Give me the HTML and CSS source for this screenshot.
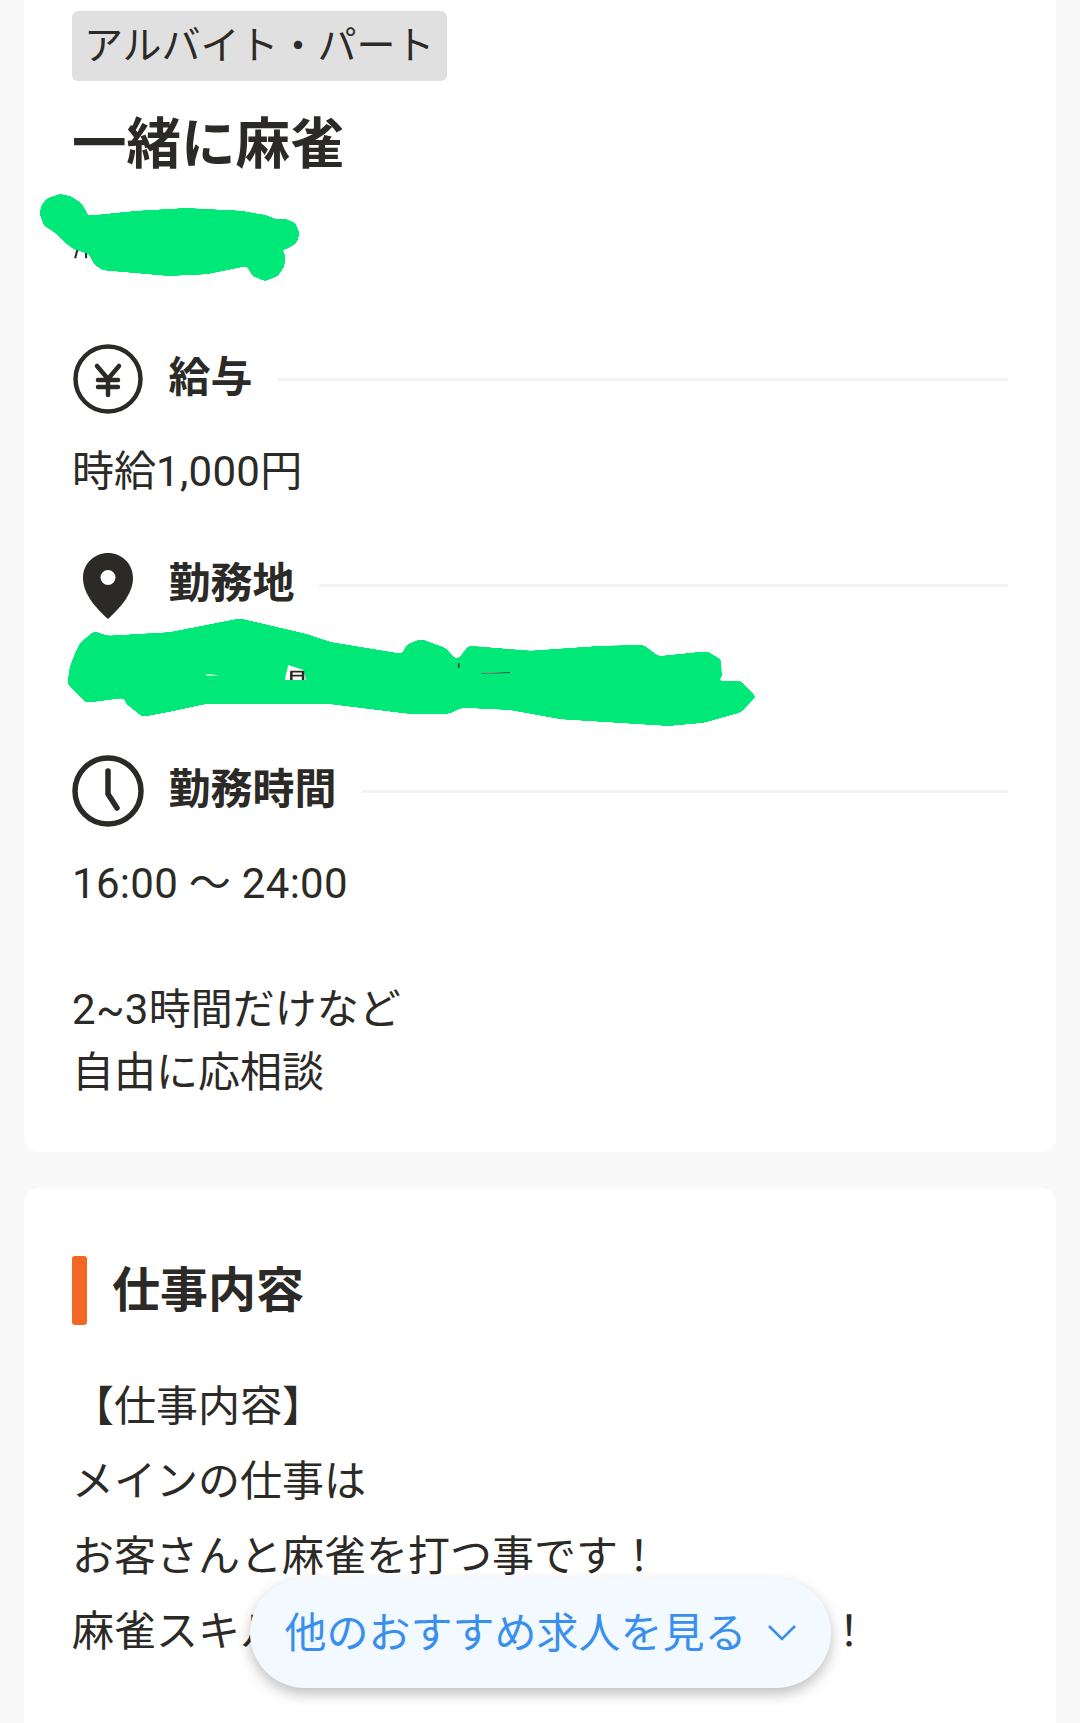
FILE: index.html
```html
<!DOCTYPE html>
<html lang="ja">
<head>
<meta charset="utf-8">
<title>一緒に麻雀</title>
<link rel="stylesheet" href="styles.css">
</head>
<body>
<svg class="defs" width="0" height="0" aria-hidden="true">
  <filter id="soften" x="-5%" y="-5%" width="110%" height="110%">
    <feGaussianBlur stdDeviation="5"/>
    <feComponentTransfer><feFuncA type="linear" slope="14" intercept="-6.500"/></feComponentTransfer>
  </filter>
</svg>
<main class="page">
  <section class="card card-summary">
    <span class="tag">アルバイト・パート</span>
    <h1 class="title">一緒に麻雀</h1>
    <div class="redacted redacted-company">
      <svg class="scribble" viewBox="0 0 1568 1500" preserveAspectRatio="none" aria-hidden="true">
        <path class="speck" d="M226 745l-8 30M250 745v30"/>
        <path class="ink" d="M118 640L124 615L140 597L175 585L205 592L235 612L255 650L400 635L540 627L700 635L770 648L800 660L830 660L855 672L867 700L858 728L830 745L815 745L826 770L822 800L805 825L770 840L735 825L718 795L600 820L490 825L300 808L275 790L260 760L215 745L190 725L160 695L130 675Z"/>
      </svg>
    </div>

    <div class="section-head">
      <svg class="icon" viewBox="0 0 72 72" aria-hidden="true">
        <circle class="line-round" cx="36" cy="36" r="32.500"/>
        <path class="line-round" d="M25 23l11 13 11-13M36 36v16M26 37h20M26 44h20"/>
      </svg>
      <h2 class="section-label">給与</h2>
      <span class="rule"></span>
    </div>
    <p class="text">時給<span class="num">1,000</span>円</p>

    <div class="section-head section-head-place">
      <svg class="icon" viewBox="0 0 72 72" aria-hidden="true">
        <path class="solid" fill-rule="evenodd" d="M36 4C23 4 11 14 11 29c0 16 13 30 25 41 12-11 25-25 25-41C61 14 49 4 36 4Zm0 17a7.500 7.500 0 1 1 0 15 7.500 7.500 0 0 1 0-15Z"/>
      </svg>
      <h2 class="section-label">勤務地</h2>
      <span class="rule"></span>
    </div>
    <div class="redacted redacted-place">
      <svg class="scribble" viewBox="0 0 1568 960" preserveAspectRatio="none" aria-hidden="true">
        <path class="ink" d="M150 400L160 370L185 337L210 350L330 340L470 298L600 345L650 370L790 405L800 375L825 360L870 385L895 425L905 410L920 380L1040 395L1180 380L1260 378L1290 412L1385 397L1410 420L1412 470L1400 487L1450 485L1478 530L1450 575L1380 605L1310 615L1100 595L1000 567L905 560L880 578L800 578L650 550L400 550L330 573L280 587L250 550L245 530L170 545L135 490L140 440Z"/>
        <path class="hole" d="M565 435L595 450L600 480L558 480Z"/>
        <path class="speck-fine" d="M569 455H596M571 455V480M594 455V480M569 467H596"/>
        <path class="hole" d="M403 462L430 466L405 467ZM945 459L1008 456L950 462Z"/>
        <path class="speck-hair" d="M945 460L1000 458M899 430V444"/>
      </svg>
    </div>

    <div class="section-head">
      <svg class="icon" viewBox="0 0 72 72" aria-hidden="true">
        <circle class="line-heavy" cx="36" cy="36" r="33"/>
        <path class="line-heavy" d="M36 16v23l9 14"/>
      </svg>
      <h2 class="section-label">勤務時間</h2>
      <span class="rule"></span>
    </div>
    <p class="text"><span class="num">16:00 〜 24:00</span><br><br><span class="num">2~3</span>時間だけなど<br>自由に応相談</p>
  </section>

  <section class="card card-detail">
    <h2 class="detail-head">仕事内容</h2>
    <p class="detail-text">【仕事内容】<br>メインの仕事は<br>お客さんと麻雀を打つ事です&#xFF01;<br>麻雀スキル<span class="hidden-run"></span>&#xFF01;</p>
  </section>
</main>
<button class="more" type="button">
  <span class="more-label">他のおすすめ求人を見る</span>
  <svg class="chevron" viewBox="0 0 30 18" aria-hidden="true"><path d="M2 2l13 13L28 2"/></svg>
</button>
</body>
</html>
```
FILE: styles.css
```css
* { box-sizing: border-box; }
html, body { margin: 0; height: 1723px; overflow: hidden; }
body {
  background: #f9f9f9;
  color: #2c2a26;
  font-family: Roboto, "Noto Sans CJK JP", sans-serif;
  font-size: 42px;
  position: relative;
}
.defs { position: absolute; }
.page {
  display: flex;
  flex-direction: column;
  gap: 36px;
  padding: 0 24px;
  margin-top: -24px;
}
.card {
  background: #fff;
  border-radius: 15px;
  padding: 0 48px;
}
.card-summary { padding-top: 35px; padding-bottom: 48px; }
.tag {
  display: inline-block;
  background: #e0e0e0;
  border-radius: 6px;
  font-size: 39px;
  line-height: 70px;
  padding: 0 12px;
  vertical-align: top;
}
.title {
  font-size: 54.500px;
  line-height: 72px;
  font-weight: 700;
  margin: 27px 0 0;
}
.redacted { position: relative; }
.redacted-company { height: 123px; margin-top: 10px; }
.redacted-place { height: 104px; }
.scribble { position: absolute; overflow: visible; display: block; }
.redacted-company .scribble { left: -72px; top: -190px; width: 540px; height: 500px; }
.redacted-place .scribble { left: -72px; top: -101px; width: 800px; height: 320px; }
.ink { fill: #00e878; stroke: #00e878; stroke-width: 6px; stroke-linejoin: round; filter: url(#soften); }
.hole { fill: #fff; }
.speck { fill: none; stroke: #2c2a26; stroke-width: 6px; }
.speck-fine { fill: none; stroke: #2c2a26; stroke-width: 5px; }
.speck-hair { fill: none; stroke: #2c2a26; stroke-width: 2.500px; }
.line-round, .line-heavy { fill: none; stroke: #2c2a26; stroke-linecap: round; stroke-linejoin: round; }
.line-round { stroke-width: 4.500px; }
.line-heavy { stroke-width: 5.500px; }
.solid { fill: #2c2a26; }
.section-head {
  display: flex;
  align-items: center;
  height: 72px;
  margin-top: 30px;
}
.section-head-place { margin-top: 46px; }
.icon { width: 72px; height: 72px; flex: none; display: block; }
.section-label {
  font-size: 42px;
  line-height: 60px;
  font-weight: 700;
  margin: 0 24px 0 24.500px;
  flex: none;
  position: relative;
  top: -1px;
}
.rule { flex: 1; height: 3px; background: #f3f3f3; }
.text {
  margin: 25px 0 0;
  font-size: 42px;
  line-height: 63px;
}
.num { letter-spacing: 0.300px; }
.card-detail { padding-top: 68px; height: 700px; }
.detail-head {
  position: relative;
  margin: 0;
  font-size: 48px;
  line-height: 69px;
  font-weight: 700;
  padding-left: 40px;
}
.detail-head::before {
  content: "";
  position: absolute;
  left: 0;
  top: 0;
  width: 15px;
  height: 69px;
  border-radius: 3px;
  background: #f26722;
}
.detail-text {
  margin: 44px 0 0;
  font-size: 42px;
  line-height: 75px;
}
.hidden-run { display: inline-block; width: 546px; }
.more {
  position: absolute;
  left: 250px;
  top: 1578px;
  width: 581px;
  height: 110px;
  display: flex;
  align-items: center;
  justify-content: center;
  gap: 20px;
  border: 0;
  border-radius: 55px;
  background: #f2f9ff;
  color: #3a8fee;
  font: inherit;
  font-size: 42px;
  box-shadow: 0 6px 14px rgba(0, 0, 0, 0.25);
}
.more-label { margin-bottom: 8px; }
.chevron { width: 30px; height: 18px; flex: none; }
.chevron path { fill: none; stroke: currentColor; stroke-width: 2.600px; }
```
